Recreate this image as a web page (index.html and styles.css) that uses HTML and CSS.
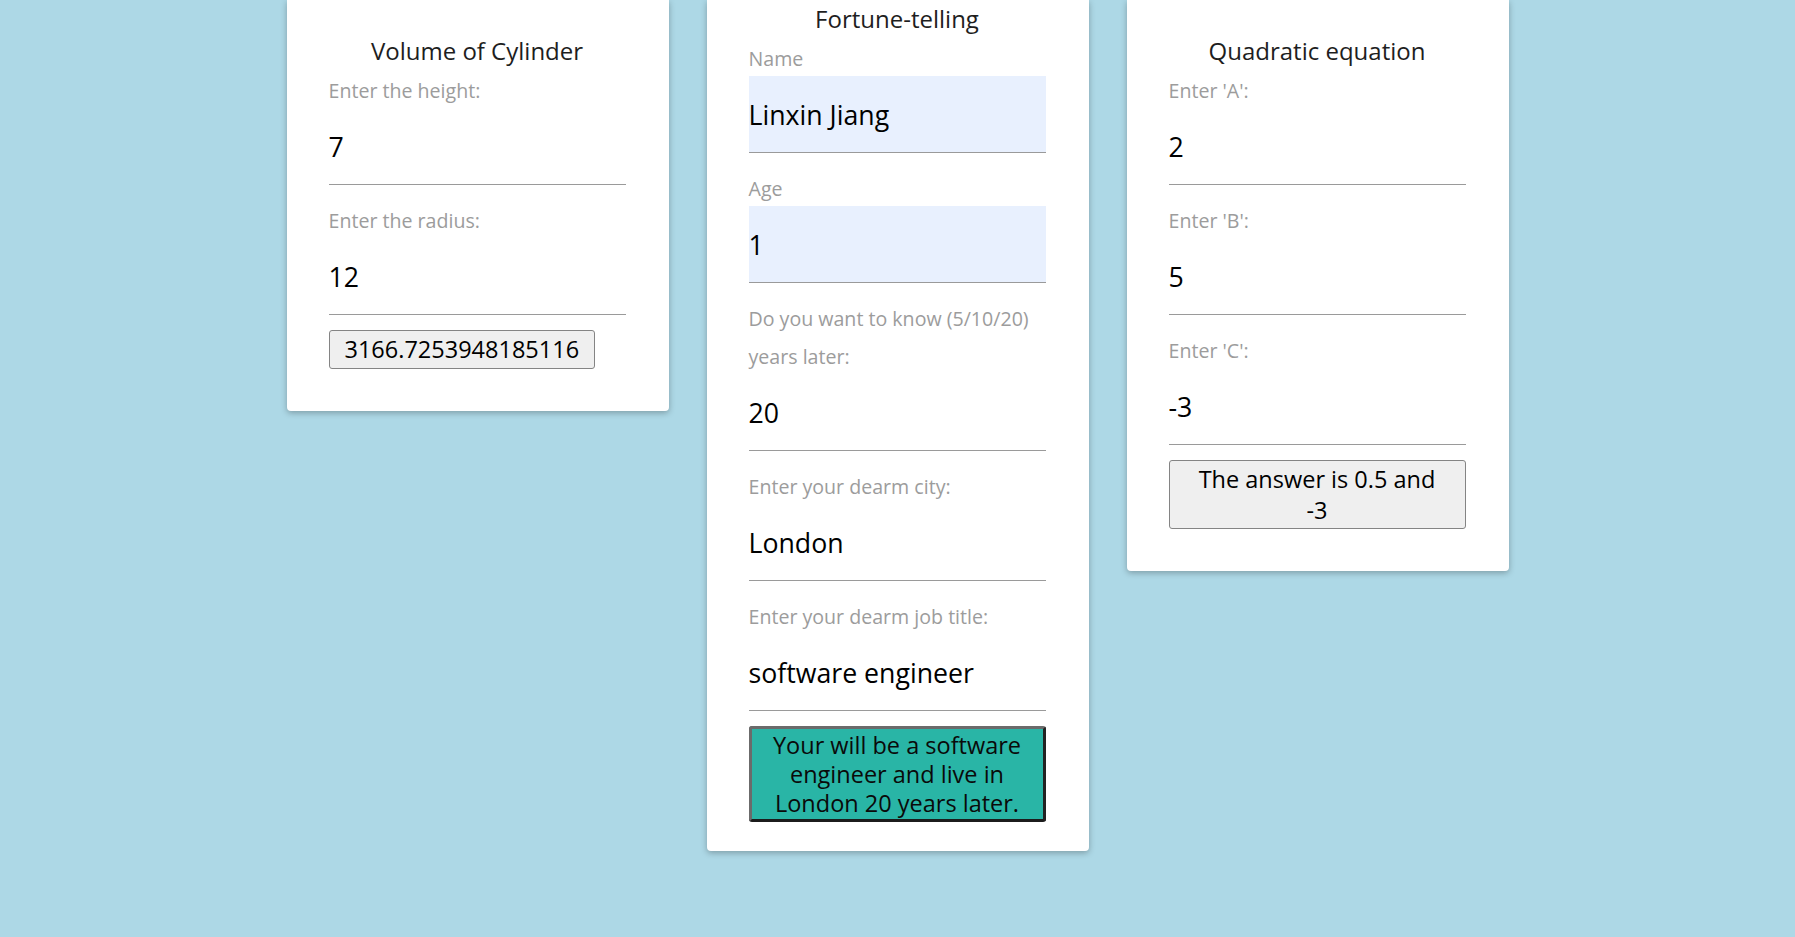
FILE: index.html
```html
<!DOCTYPE html>
<html lang="en">
<head>
<meta charset="utf-8">
<title>Calculators</title>
<link rel="stylesheet" href="styles.css">
</head>
<body>
<main class="board">
  <section class="card">
    <div class="card-title">Volume of Cylinder</div>
    <div class="field">
      <label class="field-label">Enter the height:</label>
      <input class="field-input" type="text" value="7">
    </div>
    <div class="field">
      <label class="field-label">Enter the radius:</label>
      <input class="field-input" type="text" value="12">
    </div>
    <button class="btn">3166.7253948185116</button>
  </section>

  <section class="card card-tall">
    <div class="card-title">Fortune-telling</div>
    <div class="field">
      <label class="field-label">Name</label>
      <input class="field-input field-input-filled" type="text" value="Linxin Jiang">
    </div>
    <div class="field">
      <label class="field-label">Age</label>
      <input class="field-input field-input-filled" type="text" value="1">
    </div>
    <div class="field">
      <label class="field-label">Do you want to know (5/10/20) years later:</label>
      <input class="field-input" type="text" value="20">
    </div>
    <div class="field">
      <label class="field-label">Enter your dearm city:</label>
      <input class="field-input" type="text" value="London">
    </div>
    <div class="field">
      <label class="field-label">Enter your dearm job title:</label>
      <input class="field-input" type="text" value="software engineer">
    </div>
    <button class="btn btn-block btn-teal">Your will be a software engineer and live in London 20 years later.</button>
  </section>

  <section class="card">
    <div class="card-title">Quadratic equation</div>
    <div class="field">
      <label class="field-label">Enter 'A':</label>
      <input class="field-input" type="text" value="2">
    </div>
    <div class="field">
      <label class="field-label">Enter 'B':</label>
      <input class="field-input" type="text" value="5">
    </div>
    <div class="field">
      <label class="field-label">Enter 'C':</label>
      <input class="field-input" type="text" value="-3">
    </div>
    <button class="btn btn-block">The answer is 0.5 and<br>-3</button>
  </section>
</main>
</body>
</html>
```

FILE: styles.css
```css
* {
  box-sizing: border-box;
}

html, body {
  margin: 0;
  padding: 0;
}

body {
  background: #add8e6;
  font-family: "Open Sans", "Noto Sans", sans-serif;
  min-height: 937px;
}

.board {
  display: flex;
  justify-content: center;
  align-items: flex-start;
  gap: 38px;
}

.card {
  width: 382px;
  background: #ffffff;
  padding: 35px 43px 42px 42px;
  border-radius: 0 0 4px 4px;
  box-shadow: 0 2px 6px rgba(0, 0, 0, 0.28);
  display: flex;
  flex-direction: column;
  align-items: flex-start;
}

.card-tall {
  padding-top: 3px;
  padding-bottom: 29px;
}

.card-title {
  align-self: stretch;
  text-align: center;
  font-size: 24px;
  line-height: 32px;
  color: #1e1e1e;
  margin-bottom: 3px;
}

.field {
  align-self: stretch;
  display: flex;
  flex-direction: column;
  margin-bottom: 15px;
}

.field-label {
  font-size: 19.6px;
  line-height: 38px;
  padding-top: 2px;
  margin-bottom: -2px;
  color: #9c9c9c;
}

.field-input {
  display: block;
  width: 100%;
  height: 77px;
  margin: 0;
  padding: 0;
  border: none;
  border-bottom: 1px solid #9a9a9a;
  background: transparent;
  font-family: "Open Sans", "Noto Sans", sans-serif;
  font-size: 26.7px;
  color: #000000;
  outline: none;
}

.field-input-filled {
  background: #e8f0fe;
}

.btn {
  font-family: "Open Sans", "Noto Sans", sans-serif;
  font-size: 23.5px;
  line-height: 30.5px;
  color: #000000;
  background: #efefef;
  border: 1px solid #848484;
  border-radius: 3px;
  padding: 3px 15px;
  text-align: center;
  margin: 0;
}

.btn-block {
  align-self: stretch;
  width: 100%;
}

.btn-teal {
  background: #29b5a6;
  color: #0a0a0a;
  border: 3px solid;
  border-color: #6b6b6b #222222 #1c1c1c #6b6b6b;
  line-height: 29px;
  padding: 2px 10px 1px;
}
```
